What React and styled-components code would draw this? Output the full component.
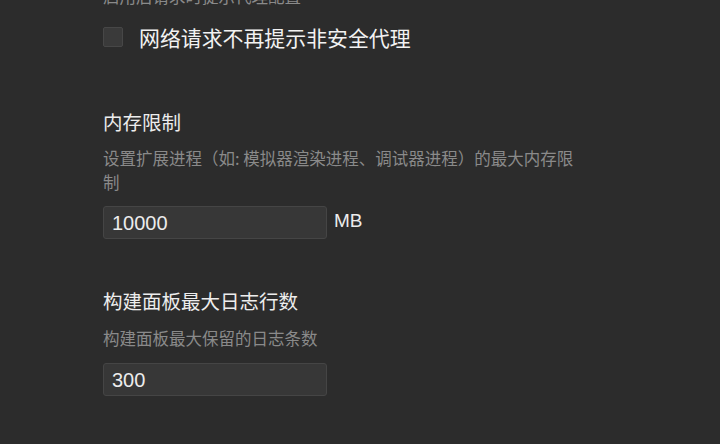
import React from "react";
import styled, { createGlobalStyle } from "styled-components";

const Global = createGlobalStyle`
  html, body { margin: 0; padding: 0; background: #2c2c2c; }
  body { overflow: hidden; }
`;

const Page = styled.div`
  width: 720px;
  height: 444px;
  overflow: hidden;
  background: #2c2c2c;
  box-sizing: border-box;
  padding-left: 103px;
  font-family: "Noto Sans CJK SC", "Microsoft YaHei", sans-serif;
`;

const Desc = styled.p`
  margin: ${(p) => p.$top || 0}px 0 0 0;
  max-width: 480px;
  font-size: 16.5px;
  line-height: 24px;
  color: #8a8a8a;
`;

const CheckRow = styled.label`
  display: flex;
  align-items: center;
  gap: 16px;
  height: 24px;
  margin-top: 17px;
`;

const Box = styled.span`
  width: 20px;
  height: 20px;
  box-sizing: border-box;
  border: 1px solid #474747;
  border-radius: 2px;
  background: #3a3a3a;
  margin-top: -1px;
`;

const CheckLabel = styled.span`
  font-size: 20.9px;
  line-height: 24px;
  color: #f2f2f2;
`;

const Section = styled.section`
  margin-top: ${(p) => p.$top}px;
  display: flex;
  flex-direction: column;
`;

const Heading = styled.h3`
  margin: 0;
  font-size: 19.5px;
  font-weight: 400;
  line-height: 26px;
  color: #ededed;
`;

const InputRow = styled.div`
  display: flex;
  align-items: center;
  gap: 7px;
  margin-top: ${(p) => p.$top}px;
`;

const Field = styled.input`
  width: 224px;
  height: 33px;
  box-sizing: border-box;
  border: 1px solid #454545;
  border-radius: 3px;
  background: #373737;
  color: #ececec;
  padding: 2px 8px 0;
  font-family: "Liberation Sans", Arial, sans-serif;
  font-size: 20px;
  outline: none;
`;

const Unit = styled.span`
  font-family: "Liberation Sans", Arial, sans-serif;
  font-size: 19px;
  color: #ececec;
  margin-top: -4px;
`;

export default function App() {
  return (
    <>
      <Global />
      <Page>
        <Desc $top={-16}>启用后请求时提示代理配置</Desc>
        <CheckRow>
          <Box />
          <CheckLabel>网络请求不再提示非安全代理</CheckLabel>
        </CheckRow>

        <Section $top={60}>
          <Heading>内存限制</Heading>
          <Desc $top={11}>
            设置扩展进程（如: 模拟器渲染进程、调试器进程）的最大内存限制
          </Desc>
          <InputRow $top={12}>
            <Field defaultValue="10000" />
            <Unit>MB</Unit>
          </InputRow>
        </Section>

        <Section $top={49}>
          <Heading>构建面板最大日志行数</Heading>
          <Desc $top={12}>构建面板最大保留的日志条数</Desc>
          <InputRow $top={13}>
            <Field defaultValue="300" />
          </InputRow>
        </Section>
      </Page>
    </>
  );
}
